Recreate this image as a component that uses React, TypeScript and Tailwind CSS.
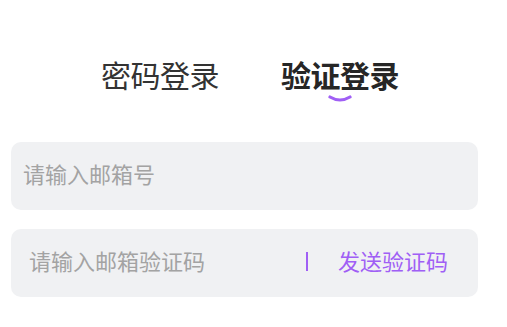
import React, { useState } from 'react';

const LoginTabs: React.FC<{ active: number; onChange: (i: number) => void }> = ({ active, onChange }) => {
  const tabs = ['密码登录', '验证登录'];
  return (
    <div className="flex items-start gap-[62px] pl-[101px] pt-[54px]">
      {tabs.map((t, i) => (
        <button
          key={t}
          onClick={() => onChange(i)}
          className={`relative text-[30px] leading-[40px] tracking-[-0.5px] ${
            active === i ? 'font-bold text-[#262626]' : 'font-normal text-[#333333]'
          }`}
        >
          {t}
          {active === i && (
            <svg
              className="absolute left-1/2 -translate-x-1/2 top-[41px]"
              width="24"
              height="8"
              viewBox="0 0 24 8"
            >
              <path d="M2 2 Q12 8 22 2" fill="none" stroke="#a05ff5" strokeWidth="3.2" strokeLinecap="round" />
            </svg>
          )}
        </button>
      ))}
    </div>
  );
};

export default function App() {
  const [tab, setTab] = useState(1);
  return (
    <div className="w-[507px] h-[327px] bg-white font-['Noto_Sans_CJK_SC','Noto_Sans',sans-serif]">
      <LoginTabs active={tab} onChange={setTab} />
      <div className="flex flex-col gap-[19px] pl-[11px] pr-[29px] pt-[48px]">
        <div className="h-[68px] rounded-[10px] bg-[#f0f1f3] flex items-center pl-[12px] pb-[7px]">
          <input
            className="w-full bg-transparent outline-none text-[22px] leading-[30px] text-[#333] placeholder:text-[#a3a3a3]"
            placeholder="请输入邮箱号"
          />
        </div>
        <div className="h-[68px] rounded-[10px] bg-[#f0f1f3] flex items-center pl-[18px] pr-[30px] pb-[6px]">
          <input
            className="flex-1 min-w-0 bg-transparent outline-none text-[22px] leading-[30px] text-[#333] placeholder:text-[#a3a3a3]"
            placeholder="请输入邮箱验证码"
          />
          <span className="w-[2px] h-[19px] bg-[#a05ff5] mr-[30px] mt-[3px]" />
          <button className="text-[22px] leading-[30px] text-[#a05ff5] whitespace-nowrap">发送验证码</button>
        </div>
      </div>
    </div>
  );
}
